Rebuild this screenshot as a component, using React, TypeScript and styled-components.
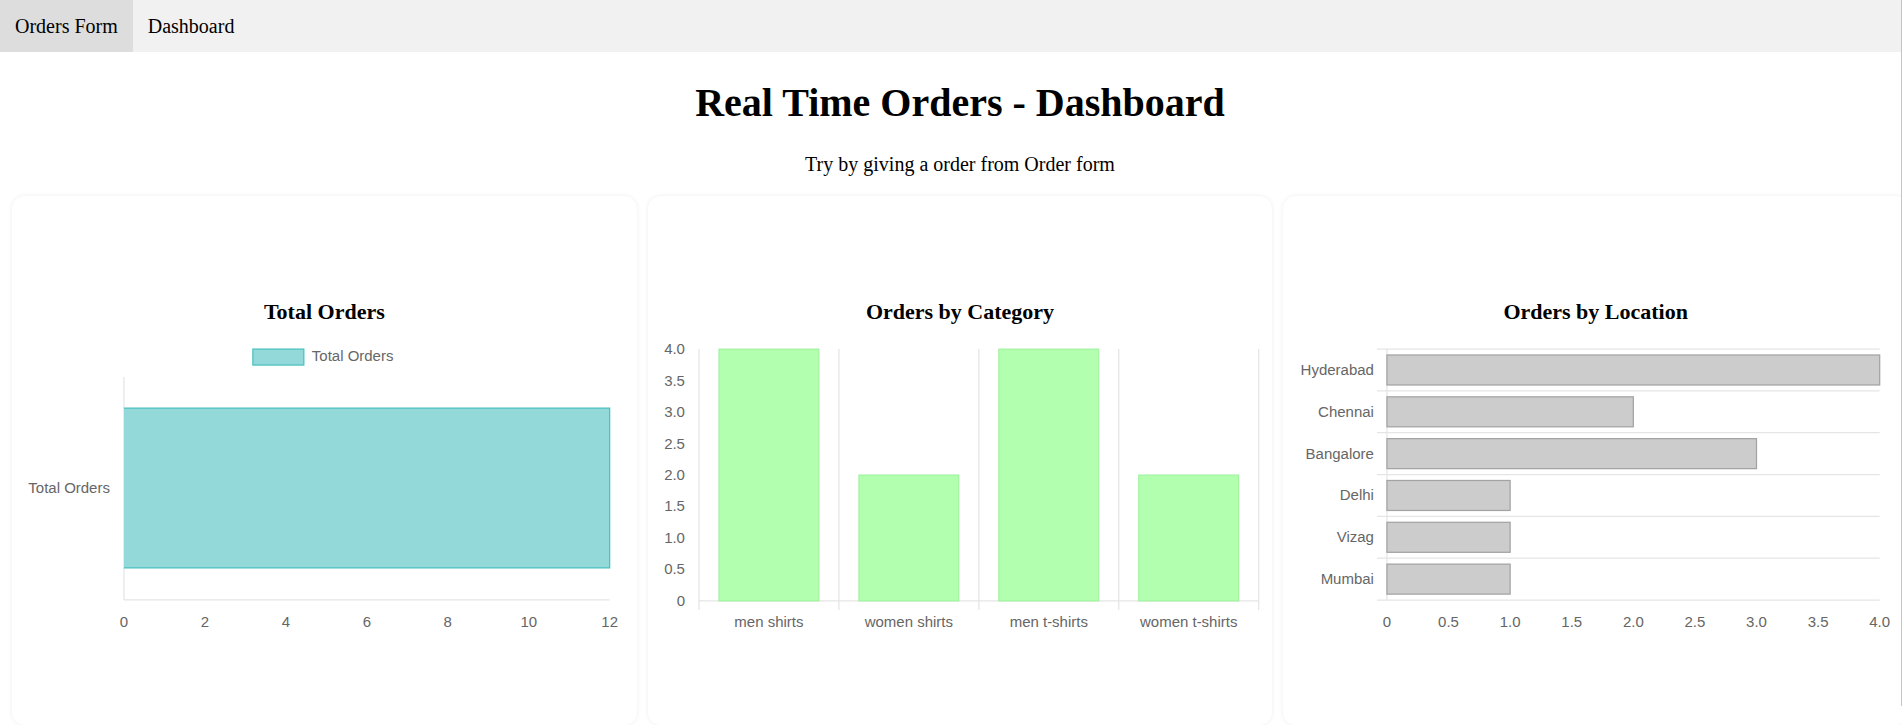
import styled, { createGlobalStyle } from 'styled-components';

const GlobalStyle = createGlobalStyle`
  html, body {
    margin: 0;
    padding: 0;
    overflow: hidden;
    background: #fff;
  }
  body {
    font-family: "Liberation Serif", "Times New Roman", serif;
    color: #000;
  }
`;

const Page = styled.div`
  width: 1920px;
`;

const NavBar = styled.nav`
  display: flex;
  height: 52px;
  background: #f1f1f1;
`;

const NavLink = styled.a<{ $active?: boolean }>`
  display: block;
  padding: 0 15px;
  line-height: 52px;
  font-size: 20px;
  color: #000;
  text-decoration: none;
  background: ${(p) => (p.$active ? '#dddddd' : 'transparent')};
  cursor: pointer;
`;

const Heading = styled.h1`
  margin: 27px 0;
  font-size: 40px;
  font-weight: bold;
  text-align: center;
`;

const Subtitle = styled.p`
  margin: 0 0 20px;
  font-size: 20px;
  text-align: center;
`;

const CardGrid = styled.div`
  display: grid;
  grid-template-columns: repeat(3, 1fr);
  gap: 11px;
  padding: 0 12px;
`;

const Card = styled.section`
  box-sizing: border-box;
  height: 529px;
  padding-top: 103px;
  background: #fff;
  border-radius: 13px;
  box-shadow: 0 0 5px rgba(0, 0, 0, 0.07);
`;

const ChartTitle = styled.h3`
  margin: 0;
  font-size: 22px;
  line-height: 26px;
  font-weight: bold;
  text-align: center;
`;

const ChartSvg = styled.svg`
  display: block;
  width: 100%;
  height: 320px;

  text {
    font-family: "Liberation Sans", Arial, Helvetica, sans-serif;
    font-size: 15px;
    fill: #666;
  }
`;

const ScrollEdge = styled.div`
  position: fixed;
  top: 0;
  right: 0;
  width: 1px;
  height: 706px;
  background: #c4c4c4;
`;

const GRID = '#e5e5e5';
const fmt = (v: number) => (v === 0 ? '0' : v.toFixed(1));

const TotalOrdersChart = () => {
  const x0 = 112;
  const unit = 40.5;
  const ticks = [0, 2, 4, 6, 8, 10, 12];
  return (
    <ChartSvg viewBox="0 0 625 320">
      <rect x={241} y={24} width={51} height={16} fill="#94d9d9" stroke="#4bc0c0" strokeWidth={1.25} />
      <text x={300} y={36}>Total Orders</text>
      <line x1={x0} y1={52} x2={x0} y2={275} stroke={GRID} strokeWidth={1.25} />
      <line x1={x0} y1={275} x2={598} y2={275} stroke={GRID} strokeWidth={1.25} />
      <rect x={x0} y={83} width={12 * unit} height={160} fill="#94d9d9" />
      <path d={`M${x0} 83 H598 V243 H${x0}`} fill="none" stroke="#4bc0c0" strokeWidth={1.25} />
      <text x={98} y={168} textAnchor="end">Total Orders</text>
      {ticks.map((t) => (
        <text key={t} x={x0 + t * unit} y={302} textAnchor="middle">
          {t}
        </text>
      ))}
    </ChartSvg>
  );
};

const categories = [
  { name: 'men shirts', value: 4 },
  { name: 'women shirts', value: 2 },
  { name: 'men t-shirts', value: 4 },
  { name: 'women t-shirts', value: 2 },
];

const CategoryChart = () => {
  const x0 = 51;
  const base = 276;
  const step = 140;
  const unit = 63;
  const yTicks = [0, 0.5, 1, 1.5, 2, 2.5, 3, 3.5, 4];
  return (
    <ChartSvg viewBox="0 0 625 320">
      {[0, 1, 2, 3, 4].map((i) => (
        <line key={i} x1={x0 + i * step} y1={24} x2={x0 + i * step} y2={285} stroke={GRID} strokeWidth={1.25} />
      ))}
      <line x1={x0} y1={base} x2={x0 + 4 * step} y2={base} stroke={GRID} strokeWidth={1.25} />
      {yTicks.map((t) => (
        <text key={t} x={37} y={base - t * unit + 5} textAnchor="end">
          {fmt(t)}
        </text>
      ))}
      {categories.map((c, i) => {
        const cx = x0 + step / 2 + i * step;
        const h = c.value * unit;
        return (
          <g key={c.name}>
            <rect x={cx - 50} y={base - h} width={100} height={h} fill="#b2ffb0" stroke="#9cf09a" strokeWidth={1} />
            <text x={cx} y={302} textAnchor="middle">
              {c.name}
            </text>
          </g>
        );
      })}
    </ChartSvg>
  );
};

const locations = [
  { name: 'Hyderabad', value: 4 },
  { name: 'Chennai', value: 2 },
  { name: 'Bangalore', value: 3 },
  { name: 'Delhi', value: 1 },
  { name: 'Vizag', value: 1 },
  { name: 'Mumbai', value: 1 },
];

const LocationChart = () => {
  const x0 = 104;
  const top = 24;
  const row = 41.85;
  const unit = 123.25;
  const xTicks = [0, 0.5, 1, 1.5, 2, 2.5, 3, 3.5, 4];
  return (
    <ChartSvg viewBox="0 0 625 320">
      {[0, 1, 2, 3, 4, 5, 6].map((i) => (
        <line key={i} x1={94} y1={top + i * row} x2={x0 + 4 * unit} y2={top + i * row} stroke={GRID} strokeWidth={1.25} />
      ))}
      <line x1={x0} y1={top} x2={x0} y2={top + 6 * row} stroke={GRID} strokeWidth={1.25} />
      {locations.map((l, i) => {
        const cy = top + row / 2 + i * row;
        return (
          <g key={l.name}>
            <rect x={x0} y={cy - 15} width={l.value * unit} height={30} fill="#cccccc" stroke="#a3a3a3" strokeWidth={1.25} />
            <text x={91} y={cy + 5} textAnchor="end">
              {l.name}
            </text>
          </g>
        );
      })}
      {xTicks.map((t) => (
        <text key={t} x={x0 + t * unit} y={302} textAnchor="middle">
          {fmt(t)}
        </text>
      ))}
    </ChartSvg>
  );
};

const App = () => {
  return (
    <>
      <GlobalStyle />
      <Page>
        <NavBar>
          <NavLink $active>Orders Form</NavLink>
          <NavLink>Dashboard</NavLink>
        </NavBar>
        <Heading>Real Time Orders - Dashboard</Heading>
        <Subtitle>Try by giving a order from Order form</Subtitle>
        <CardGrid>
          <Card>
            <ChartTitle>Total Orders</ChartTitle>
            <TotalOrdersChart />
          </Card>
          <Card>
            <ChartTitle>Orders by Category</ChartTitle>
            <CategoryChart />
          </Card>
          <Card>
            <ChartTitle>Orders by Location</ChartTitle>
            <LocationChart />
          </Card>
        </CardGrid>
      </Page>
      <ScrollEdge />
    </>
  );
};

export default App;
